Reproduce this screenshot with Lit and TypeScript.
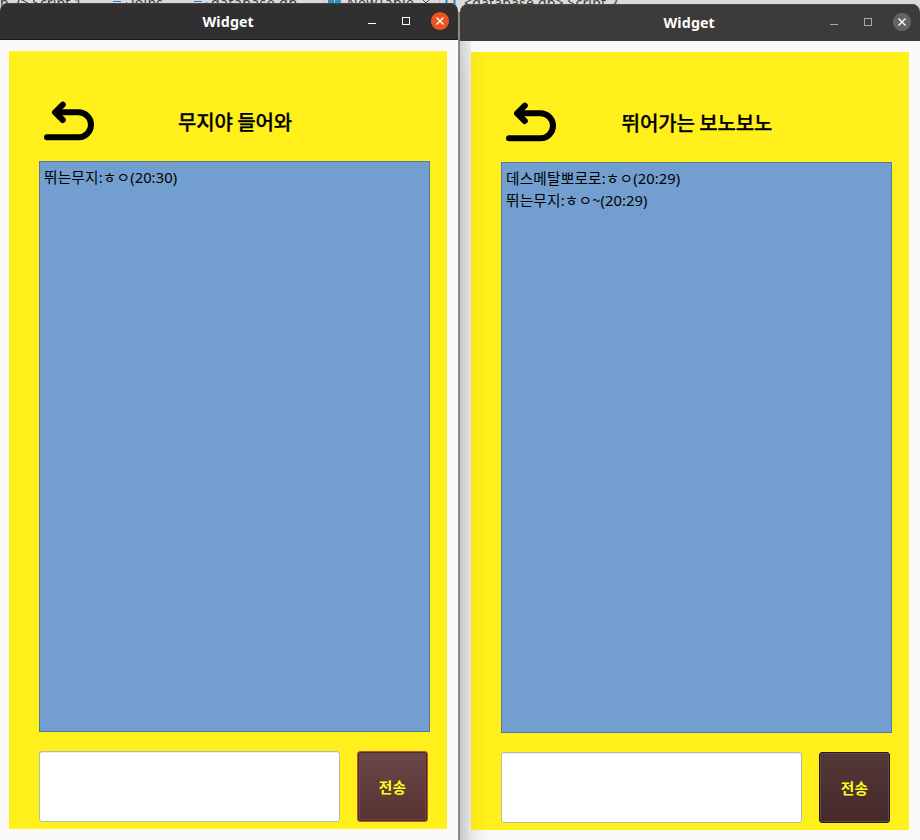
import { LitElement, html, css, svg } from "lit";
import { customElement, property } from "lit/decorators.js";

interface Message { name: string; text: string; time: string; }

@customElement("chat-window")
class ChatWindow extends LitElement {
  @property() room = "";
  @property({ type: Boolean, reflect: true }) active = false;
  @property({ attribute: false }) messages: Message[] = [];

  static styles = css`
    :host {
      display: flex; flex-direction: column; box-sizing: border-box;
      width: 460px; height: 836px; margin-top: 4px; background: #fafafa;
      border-radius: 8px 8px 0 0; overflow: hidden;
      font-family: "Noto Sans", "Noto Sans CJK KR", sans-serif; color: #000;
    }
    :host([active]) { width: 458px; height: 837px; margin-top: 3px; }
    .bar {
      flex: none; height: 37px; box-sizing: border-box; background: #3d3b39;
      border-top: 1px solid #4b4947; display: grid; align-items: center;
      grid-template-columns: 1fr auto 1fr; padding-right: 8px; padding-left: 6px;
    }
    :host([active]) .bar { background: #322f30; border-top-color: #464344; border-bottom: 1px solid #1c1a1b; }
    .title {
      grid-column: 2; color: #fff; font: bold 14.2px/20px "Noto Sans", sans-serif;
      letter-spacing: 0.15px; width: 52px; white-space: nowrap; padding-left: 1px;
    }
    .controls { justify-self: end; display: block; }
    :host([active]) .controls { margin-bottom: 1px; }
    .panel {
      flex: none; width: 438px; height: 778px; box-sizing: border-box;
      margin: 11px 0 0 11px; padding: 50px 0 0 30px; background: #fff01c;
    }
    :host([active]) .panel { margin-left: 9px; }
    .head { display: flex; height: 60px; }
    .back { flex: none; display: block; margin-left: 5px; }
    .room {
      width: 282px; text-align: center; margin-left: -1px; line-height: 41px;
      font-family: "Noto Sans CJK KR", sans-serif; font-size: 20px; font-weight: 500;
      letter-spacing: -0.1px; -webkit-text-stroke: 0.25px #000; white-space: nowrap;
    }
    .log {
      width: 391px; height: 571px; box-sizing: border-box; border: 1px solid #537aa5;
      background: #729fcf; padding: 4px 4px; font-size: 14.67px; line-height: 22px;
      font-family: "Noto Sans", "Noto Sans CJK KR", sans-serif;
    }
    .line { white-space: nowrap; letter-spacing: 0.1px; }
    .ko { font-family: "Noto Sans CJK KR", sans-serif; letter-spacing: 0.2px; }
    .compose { display: flex; gap: 17px; margin-top: 19px; }
    .entry {
      width: 301px; height: 71px; box-sizing: border-box; background: #fff;
      border: 1px solid #b9b7b1; border-radius: 3px; box-shadow: inset 0 1px #ededed;
    }
    .send {
      width: 71px; height: 71px; box-sizing: border-box; padding: 0; color: #ffff1c;
      font: bold 14.67px/20px "Noto Sans CJK KR", sans-serif; letter-spacing: 0.3px;
      border: 1px solid #251617; border-radius: 3px;
      background: linear-gradient(#543737, #462a2b); box-shadow: inset 0 0 0 1px #664748;
    }
    :host([active]) .send {
      border-color: #b8523c; background: linear-gradient(#694948, #573230);
      box-shadow: inset 0 0 0 1px #4a2c2c, inset 0 0 0 2px #704641;
    }
  `;

  private controls() {
    const ink = this.active ? "#fff" : "#aaa8a6";
    return html`<svg class="controls" width="82" height="20" viewBox="0 0 82 20">
      ${svg`<path d="M0 ${this.active ? 12.5 : 11.5}h8" stroke=${ink} />
      <rect x="34.5" y=${this.active ? 6.5 : 5.5} width="7" height="7" fill="none" stroke=${ink} />
      <circle cx="72" cy=${this.active ? 10 : 9} r="9.1" fill=${this.active ? "#e95420" : "#656363"} />
      <path d=${this.active ? "M68.5 6.5l7 7m0-7l-7 7" : "M68.5 5.5l7 7m0-7l-7 7"} stroke="#fff" stroke-width="1.4" />`}
    </svg>`;
  }

  render() {
    return html`
      <div class="bar"><div class="title">Widget</div>${this.controls()}</div>
      <div class="panel">
        <div class="head">
          <svg class="back" width="51" height="42" viewBox="0 0 51 42" fill="none" stroke="#000"
            stroke-width="6" stroke-linecap="round" stroke-linejoin="round">
            <path d="M3 36.3H34.5A12.5 12.5 0 0 0 34.5 11.3H13.5M18.8 3.7L11 11.3L18.8 19" />
          </svg>
          <div class="room">${this.room}</div>
        </div>
        <div class="log">
          ${this.messages.map((m) => html`<div class="line"><span class="ko">${m.name}</span>:<span class="ko">${m.text}</span>(${m.time})</div>`)}
        </div>
        <div class="compose">
          <div class="entry"></div>
          <button class="send">전송</button>
        </div>
      </div>`;
  }
}

@customElement("app-root")
class AppRoot extends LitElement {
  static styles = css`
    :host {
      display: block; position: relative; width: 920px; height: 840px; overflow: hidden;
      background: #dbdad9;
    }
    .desk { display: flex; gap: 2px; width: 920px; }
    .desk chat-window { flex: none; position: relative; }
    .tabs {
      position: absolute; left: 0; top: -10px; width: 920px; height: 22px;
      font: 14px/18px "Noto Sans", sans-serif;
    }
    .seam {
      position: absolute; left: 458px; top: 12px; width: 2px; height: 828px;
      background: linear-gradient(90deg, #8e8e8e 50%, #828282 50%);
    }
    .shade {
      position: absolute; left: 460px; top: 41px; width: 11px; height: 799px;
      background: linear-gradient(90deg, rgba(0,0,0,.2), rgba(0,0,0,.08));
      -webkit-mask-image: linear-gradient(rgba(0,0,0,.75), #000 40px);
    }
    .foot {
      position: absolute; left: 471px; top: 830px; width: 18px; height: 10px;
      background: linear-gradient(90deg, rgba(0,0,0,.08), rgba(0,0,0,0));
    }
    .glow {
      position: absolute; left: 471px; top: 52px; width: 14px; height: 778px;
      background: linear-gradient(90deg, rgba(190,140,0,.1), rgba(190,140,0,0));
    }
  `;

  render() {
    return html`
      <svg class="tabs" viewBox="0 0 920 22">
        ${svg`<g fill="#3c3c3c">
          <text x="0" y="18" textLength="82">b 2&gt; Script 1</text>
          <text x="131" y="18" textLength="32">joins</text>
          <text x="211" y="18" textLength="86">database.db</text>
          <text x="347" y="18" textLength="67">NewTable</text>
          <text x="464" y="18" textLength="154">&lt;database.db&gt; Script 2</text>
        </g>
        <path d="M113 11.5h8M194 11.5h8" stroke="#1688c8" />
        <path d="M126.5 12v2M206.5 12v2" stroke="#219653" />
        <rect x="328" y="8" width="13" height="6" fill="#2f91c2" />
        <path d="M334.5 8v6" stroke="#95d1ea" />
        <path d="M422 9l8 8m0-8l-8 8" stroke="#444" />
        <path d="M446.5 8v14M454.5 8v14" stroke="#1688c8" stroke-width="2" />
        <path d="M323.5 8v10M439.5 8v10" stroke="#bbb" />`}
      </svg>
      <div class="desk">
        <chat-window active .room=${"무지야 들어와"}
          .messages=${[{ name: "뛰는무지", text: "ㅎㅇ", time: "20:30" }]}></chat-window>
        <chat-window .room=${"뛰어가는 보노보노"}
          .messages=${[
            { name: "데스메탈뽀로로", text: "ㅎㅇ", time: "20:29" },
            { name: "뛰는무지", text: "ㅎㅇ~", time: "20:29" },
          ]}></chat-window>
      </div>
      <div class="seam"></div>
      <div class="glow"></div>
      <div class="shade"></div>
      <div class="foot"></div>`;
  }
}
